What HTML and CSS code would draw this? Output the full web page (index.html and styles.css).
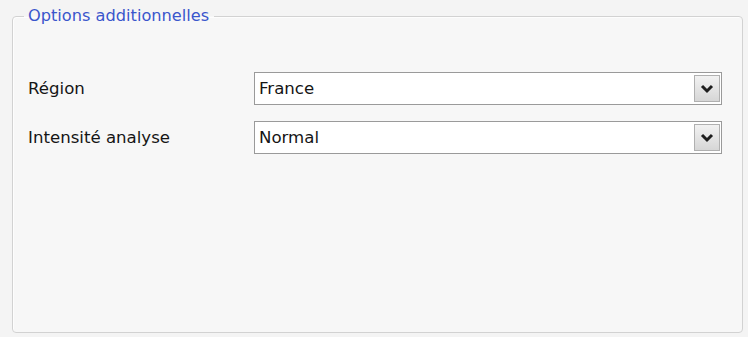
FILE: index.html
```html
<!DOCTYPE html>
<html>
<head>
<meta charset="utf-8">
<link rel="stylesheet" href="styles.css">
</head>
<body>
<div class="page">
  <fieldset class="group">
    <legend class="legend">Options additionnelles</legend>
    <div class="row">
      <span class="label">Région</span>
      <div class="combo">
        <span class="value">France</span>
        <span class="btn"><svg width="14" height="10" viewBox="0 0 14 10"><path d="M2 2 L7 7 L12 2" fill="none" stroke="#1e1e1e" stroke-width="3"/></svg></span>
      </div>
    </div>
    <div class="row">
      <span class="label">Intensité analyse</span>
      <div class="combo">
        <span class="value">Normal</span>
        <span class="btn"><svg width="14" height="10" viewBox="0 0 14 10"><path d="M2 2 L7 7 L12 2" fill="none" stroke="#1e1e1e" stroke-width="3"/></svg></span>
      </div>
    </div>
  </fieldset>
</div>
</body>
</html>
```
FILE: styles.css
```css
html, body { margin: 0; padding: 0; }
body {
  background: #f4f4f4;
  font-family: "DejaVu Sans", Verdana, sans-serif;
  font-size: 16.6px;
  color: #151515;
  width: 748px;
  height: 337px;
  overflow: hidden;
}
.page { padding: 6px 5px 4px 12px; height: 337px; box-sizing: border-box; }
.group {
  margin: 0;
  border: 1px solid #d2d2d2;
  border-radius: 4px;
  background: #f7f7f7;
  height: 327px;
  box-sizing: border-box;
  padding: 46px 20px 0 15px;
  box-shadow: inset 1px 1px 0 #fdfdfd;
}
.legend {
  color: #3a56cc;
  padding: 0 5px 0 4px;
  margin-left: -4px;
  font-size: 16.2px;
  line-height: 20px;
}
.row {
  display: flex;
  align-items: center;
  margin-bottom: 16px;
}
.label { width: 226px; }
.combo {
  flex: 1;
  height: 33px;
  box-sizing: border-box;
  border: 1px solid #9a9a9a;
  background: #fff;
  display: flex;
  align-items: center;
  padding: 2px 1px 2px 4px;
}
.value { flex: 1; }
.btn {
  width: 26px;
  height: 27px;
  box-sizing: border-box;
  border: 1px solid #b0b0b0;
  background: linear-gradient(#f2f2f2, #d6d6d6);
  display: flex;
  align-items: center;
  justify-content: center;
}
```
